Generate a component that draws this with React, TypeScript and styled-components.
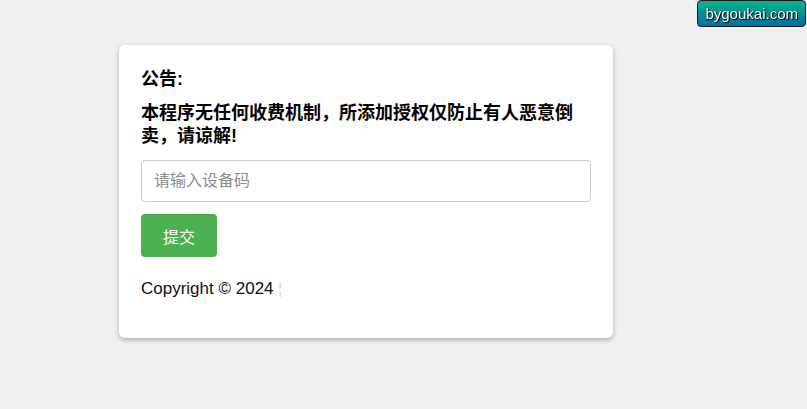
import React from "react";
import styled, { createGlobalStyle } from "styled-components";

const GlobalStyle = createGlobalStyle`
  html, body {
    margin: 0;
    padding: 0;
    background: #f0f0f0;
    font-family: "Liberation Sans", "Noto Sans CJK SC", Arial, sans-serif;
    color: #000;
  }
`;

const Page = styled.main`
  min-height: 409px;
  box-sizing: border-box;
  padding: 45px 0 0 119px;
`;

const Card = styled.section`
  width: 494px;
  box-sizing: border-box;
  padding: 23px 22px 39px;
  background: #ffffff;
  border-radius: 6px;
  box-shadow: 0 2px 5px rgba(0, 0, 0, 0.28);
`;

const Title = styled.h3`
  margin: 0;
  font-size: 18px;
  font-weight: bold;
  line-height: 23px;
`;

const Notice = styled.p`
  margin: 11px 0 0;
  padding-right: 4px;
  font-size: 18px;
  font-weight: bold;
  line-height: 23px;
`;

const Input = styled.input`
  display: block;
  width: 100%;
  height: 42px;
  box-sizing: border-box;
  margin-top: 12px;
  padding: 0 12px;
  border: 1px solid #cccccc;
  border-radius: 4px;
  font-family: inherit;
  font-size: 16px;
  color: #333;
  outline: none;

  &::placeholder {
    color: #8d8d8d;
  }
`;

const Button = styled.button<{ tone?: string }>`
  display: block;
  height: 43px;
  margin-top: 12px;
  padding: 0 22px;
  border: none;
  border-radius: 4px;
  background: ${({ tone }) => tone || "#4caf50"};
  color: #ffffff;
  font-family: inherit;
  font-size: 16px;
  cursor: pointer;
`;

const Copyright = styled.p`
  margin: 22px 0 0;
  font-size: 17px;
  line-height: 20px;
  color: #111;
`;

/* white link text in the original only shows as a faint fringe */
const Ghost = styled.span`
  color: #ead2b4;
  font-size: 15px;
`;

const Badge = styled.a`
  position: fixed;
  top: 0;
  right: 1px;
  height: 27px;
  box-sizing: border-box;
  padding: 0 7px;
  border: 1px solid #1c1c1c;
  border-radius: 4px;
  background: linear-gradient(to bottom, #00b68a, #006ea3);
  color: #ffffff;
  font-family: "Liberation Sans", Arial, sans-serif;
  font-size: 15px;
  line-height: 25px;
  text-decoration: none;
  text-shadow: 1px 1px 1px #000, 0 0 1px #000;
`;

export default function App() {
  return (
    <>
      <GlobalStyle />
      <Page>
        <Card>
          <Title>公告:</Title>
          <Notice>本程序无任何收费机制，所添加授权仅防止有人恶意倒卖，请谅解!</Notice>
          <Input type="text" placeholder="请输入设备码" />
          <Button>提交</Button>
          <Copyright>
            Copyright © 2024 <Ghost>¦</Ghost>
          </Copyright>
        </Card>
      </Page>
      <Badge href="#">bygoukai.com</Badge>
    </>
  );
}
